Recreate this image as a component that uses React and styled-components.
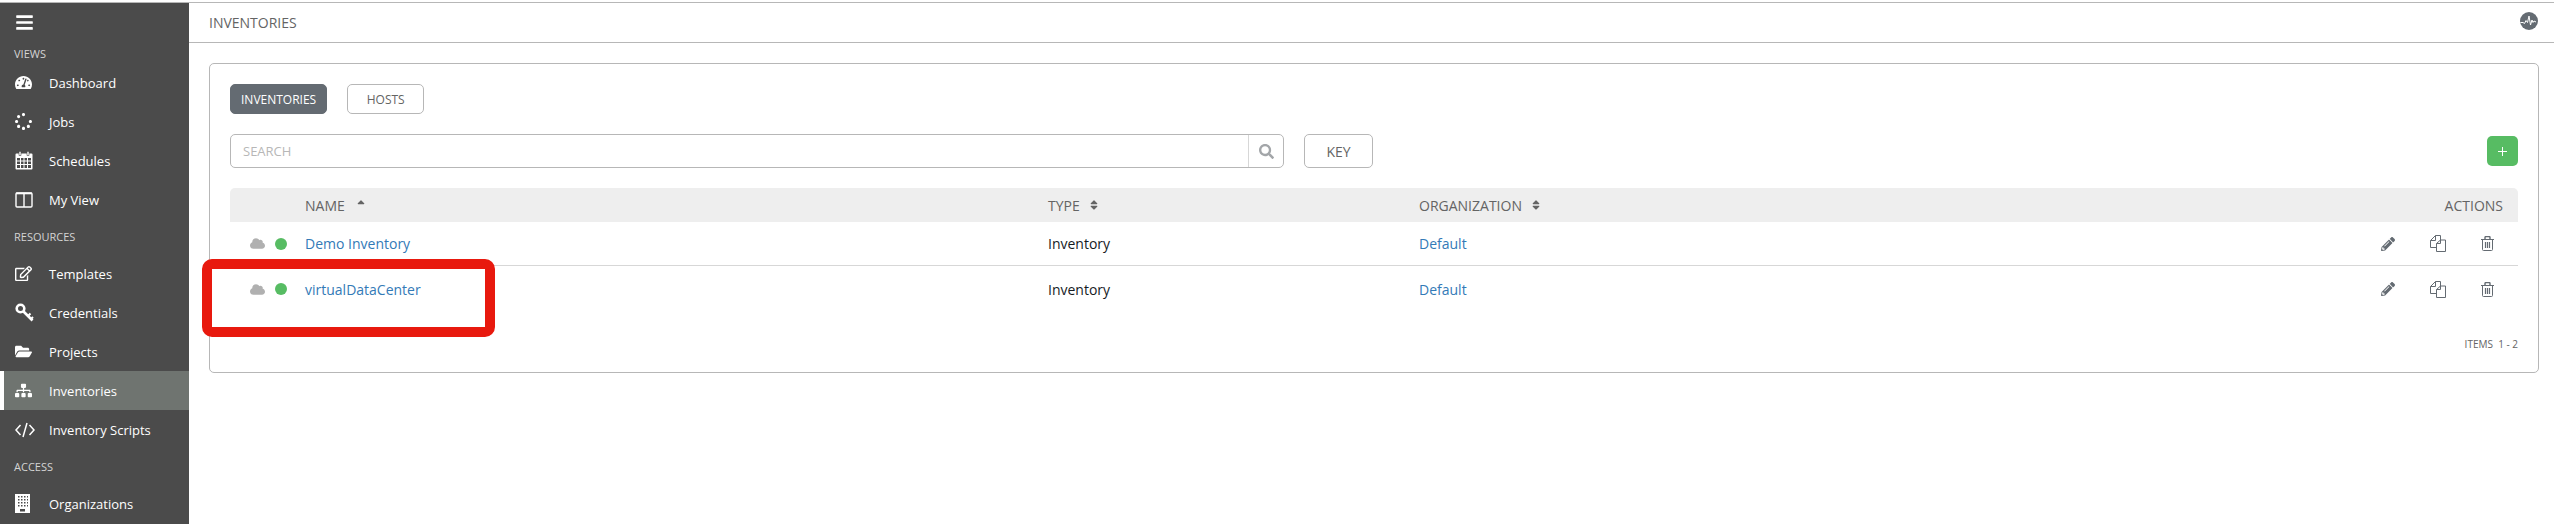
import React from "react";
import styled, { createGlobalStyle } from "styled-components";
import {
  FaBars,
  FaTachometerAlt,
  FaSpinner,
  FaRegEdit,
  FaFolderOpen,
  FaSitemap,
  FaCloud,
  FaSearch,
  FaPencilAlt,
  FaSort,
  FaSortUp,
} from "react-icons/fa";

const GlobalStyle = createGlobalStyle`
  html, body {
    margin: 0;
    background: #fff;
    overflow: hidden;
  }
  * {
    box-sizing: border-box;
  }
  body {
    font-family: "Open Sans", "Liberation Sans", sans-serif;
  }
`;

const CalendarIcon = () => (
  <svg width="18" height="19" viewBox="0 0 18 19">
    <path d="M1.5 2.5h15a1 1 0 0 1 1 1v14a1 1 0 0 1-1 1h-15a1 1 0 0 1-1-1v-14a1 1 0 0 1 1-1z" fill="#fff" />
    <path
      d="M2 7h3v2.500H2zM6 7h2.500v2.500H6zM9.500 7H12v2.500H9.500zM13 7h3v2.500h-3zM2 10.500h3V13H2zM6 10.500h2.500V13H6zM9.500 10.500H12V13H9.500zM13 10.500h3V13h-3zM2 14h3v3H2zM6 14h2.500v3H6zM9.500 14H12v3H9.500zM13 14h3v3h-3z"
      fill="#4b4b4b"
    />
    <path d="M4 0.500h2v4H4zM12 0.500h2v4h-2z" fill="#fff" stroke="#4b4b4b" strokeWidth="0.6" />
  </svg>
);

const ColumnsIcon = () => (
  <svg width="18" height="16" viewBox="0 0 18 16" fill="none">
    <rect x="1" y="1" width="16" height="14" rx="1" stroke="#fff" strokeWidth="1.4" />
    <rect x="1" y="0.5" width="16" height="1.800" fill="#fff" />
    <path d="M9 1v14" stroke="#fff" strokeWidth="1.400" />
  </svg>
);

const KeyIcon = () => (
  <svg width="19" height="19" viewBox="0 0 19 19" fill="none" stroke="#fff">
    <circle cx="5.500" cy="5.500" r="3.800" strokeWidth="2.600" />
    <path d="M8.500 8.500l9 9" strokeWidth="2.600" />
    <path d="M13 13l2.500-2.500M16 16l2-2" strokeWidth="2" />
  </svg>
);

const CodeIcon = () => (
  <svg width="20" height="16" viewBox="0 0 20 16" fill="none" stroke="#fff" strokeWidth="1.500">
    <path d="M5.500 3L1 8l4.500 5M14.500 3L19 8l-4.500 5M12 1L8 15" />
  </svg>
);

const BuildingIcon = () => (
  <svg width="15" height="19" viewBox="0 0 15 19">
    <rect width="15" height="19" fill="#fff" />
    <path
      d="M3 2h1.500v1.500H3zM6 2h1.500v1.500H6zM9 2h1.500v1.500H9zM12 2h1v1.500h-1zM3 5h1.500v1.500H3zM6 5h1.500v1.500H6zM9 5h1.500v1.500H9zM12 5h1v1.500h-1zM3 8h1.500v1.500H3zM6 8h1.500v1.500H6zM9 8h1.500v1.500H9zM12 8h1v1.500h-1zM3 11h1.500v1.500H3zM6 11h1.500v1.500H6zM9 11h1.500v1.500H9zM12 11h1v1.500h-1zM5 15h5v2.500H5z"
      fill="#4b4b4b"
    />
  </svg>
);

const FilesIcon = () => (
  <svg width="16" height="17" viewBox="0 0 16 17" fill="none" stroke="#646b72">
    <path d="M6.500 12.500h-6V5.500l5-5h5v5" />
    <path d="M5.500 0.500v5h-5" />
    <path d="M6.500 16.500v-8l4-3.500h5v11.500z" />
    <path d="M10.500 5v3.500h-4" />
  </svg>
);

const TrashIcon = () => (
  <svg width="13" height="15" viewBox="0 0 13 15" fill="none" stroke="#646b72">
    <path d="M0 3.500h13" />
    <path d="M4 3V1.500a1 1 0 0 1 1-1h3a1 1 0 0 1 1 1V3" strokeWidth="1.400" />
    <path d="M1.500 3.500v10a1 1 0 0 0 1 1h8a1 1 0 0 0 1-1v-10" />
    <path d="M4.500 6v6M6.500 6v6M8.500 6v6" strokeWidth="1.200" />
  </svg>
);

const PlusIcon = () => (
  <svg width="11" height="11" viewBox="0 0 11 11" stroke="#fff">
    <path d="M5.500 1v9M1 5.500h9" />
  </svg>
);

const ActivityIcon = () => (
  <svg width="18" height="18" viewBox="0 0 18 18">
    <circle cx="9" cy="9" r="9" fill="#646b72" />
    <path
      d="M0.500 10.500h2.500l1.500 1 1.500-3 1.500 2 1.500-6.500 1.500 9 1.500-5 1 2.500 1-1.500 2 1"
      fill="none"
      stroke="#fff"
      strokeWidth="1"
    />
  </svg>
);

const views = [
  { label: "Dashboard", icon: <FaTachometerAlt /> },
  { label: "Jobs", icon: <FaSpinner /> },
  { label: "Schedules", icon: <CalendarIcon /> },
  { label: "My View", icon: <ColumnsIcon /> },
];

const resources = [
  { label: "Templates", icon: <FaRegEdit /> },
  { label: "Credentials", icon: <KeyIcon /> },
  { label: "Projects", icon: <FaFolderOpen /> },
  { label: "Inventories", icon: <FaSitemap />, active: true },
  { label: "Inventory Scripts", icon: <CodeIcon /> },
];

const inventories = [{ name: "Demo Inventory" }, { name: "virtualDataCenter" }];

const App = () => {
  return (
    <Page>
      <GlobalStyle />
      <TopLine />
      <Layout>
        <Sidebar>
          <Burger>
            <FaBars />
          </Burger>
          <SectionLabel $first>VIEWS</SectionLabel>
          {views.map((item) => (
            <NavItem key={item.label}>
              <NavIcon>{item.icon}</NavIcon>
              {item.label}
            </NavItem>
          ))}
          <SectionLabel>RESOURCES</SectionLabel>
          {resources.map((item) => (
            <NavItem key={item.label} $active={item.active}>
              <NavIcon>{item.icon}</NavIcon>
              {item.label}
            </NavItem>
          ))}
          <SectionLabel>ACCESS</SectionLabel>
          <NavItem>
            <NavIcon>
              <BuildingIcon />
            </NavIcon>
            Organizations
          </NavItem>
        </Sidebar>

        <Main>
          <TopBar>
            <PageTitle>INVENTORIES</PageTitle>
            <ActivityIcon />
          </TopBar>

          <Card>
            <Tabs>
              <Tab $selected>INVENTORIES</Tab>
              <Tab>HOSTS</Tab>
            </Tabs>

            <Toolbar>
              <SearchBox>
                <SearchInput>SEARCH</SearchInput>
                <SearchButton>
                  <FaSearch />
                </SearchButton>
              </SearchBox>
              <KeyButton>KEY</KeyButton>
              <AddButton>
                <PlusIcon />
              </AddButton>
            </Toolbar>

            <TableHead>
              <span />
              <HeadCell>
                NAME
                <SortMark $active>
                  <FaSortUp />
                </SortMark>
              </HeadCell>
              <HeadCell>
                TYPE
                <SortMark>
                  <FaSort />
                </SortMark>
              </HeadCell>
              <HeadCell>
                ORGANIZATION
                <SortMark>
                  <FaSort />
                </SortMark>
              </HeadCell>
              <ActionsHead>ACTIONS</ActionsHead>
            </TableHead>

            {inventories.map((row, i) => (
              <TableRow key={row.name} $last={i === inventories.length - 1}>
                <StatusCell>
                  <FaCloud />
                  <StatusDot />
                </StatusCell>
                <RowLink>{row.name}</RowLink>
                <span>Inventory</span>
                <RowLink>Default</RowLink>
                <RowActions>
                  <FaPencilAlt />
                  <FilesIcon />
                  <TrashIcon />
                </RowActions>
              </TableRow>
            ))}

            <Pagination>ITEMS&nbsp; 1 - 2</Pagination>
            <Highlight />
          </Card>
        </Main>
      </Layout>
    </Page>
  );
};

const Page = styled.div`
  height: 524px;
  overflow: hidden;
  padding-top: 2px;
`;

const TopLine = styled.div`
  height: 1px;
  background: #b7b7b7;
`;

const Layout = styled.div`
  display: flex;
  height: 521px;
`;

const Sidebar = styled.nav`
  width: 189px;
  flex: none;
  background: #4b4b4b;
  color: #fff;
  overflow: hidden;
`;

const Burger = styled.div`
  height: 38px;
  padding-left: 15px;
  display: flex;
  align-items: center;
  font-size: 19px;
`;

const SectionLabel = styled.div`
  height: ${(p) => (p.$first ? "22px" : "35px")};
  padding: ${(p) => (p.$first ? "3px" : "0")} 0 0 14px;
  display: flex;
  align-items: center;
  font-size: 11px;
  color: #d4d4d4;
`;

const NavItem = styled.div`
  height: 39px;
  display: flex;
  align-items: center;
  font-size: 13px;
  padding-left: ${(p) => (p.$active ? "11px" : "15px")};
  border-left: ${(p) => (p.$active ? "4px solid #fff" : "none")};
  background: ${(p) => (p.$active ? "#6f7470" : "transparent")};
`;

const NavIcon = styled.span`
  width: 34px;
  flex: none;
  display: flex;
  align-items: center;
  font-size: 17px;
`;

const Main = styled.main`
  flex: 1;
  min-width: 0;
`;

const TopBar = styled.header`
  height: 40px;
  border-bottom: 1px solid #b7b7b7;
  padding: 0 16px 0 20px;
  display: flex;
  align-items: center;
  justify-content: space-between;
  svg {
    margin-top: -3px;
  }
`;

const PageTitle = styled.div`
  font-size: 14px;
  color: #646464;
`;

const Card = styled.section`
  position: relative;
  margin: 20px 15px 0 20px;
  height: 310px;
  border: 1px solid #b7b7b7;
  border-radius: 5px;
  padding: 20px 20px 0;
`;

const Tabs = styled.div`
  display: flex;
  gap: 20px;
`;

const Tab = styled.div`
  height: 30px;
  min-width: 77px;
  padding: 0 10px;
  display: flex;
  align-items: center;
  justify-content: center;
  font-size: 12px;
  border-radius: 5px;
  border: 1px solid ${(p) => (p.$selected ? "#646b72" : "#b7b7b7")};
  background: ${(p) => (p.$selected ? "#646b72" : "#fff")};
  color: ${(p) => (p.$selected ? "#fff" : "#646464")};
`;

const Toolbar = styled.div`
  display: flex;
  align-items: center;
  margin-top: 20px;
`;

const SearchBox = styled.div`
  width: 1054px;
  height: 34px;
  border: 1px solid #b7b7b7;
  border-radius: 5px;
  display: flex;
`;

const SearchInput = styled.div`
  flex: 1;
  padding-left: 12px;
  display: flex;
  align-items: center;
  font-size: 13px;
  color: #b7b7b7;
`;

const SearchButton = styled.div`
  width: 35px;
  border-left: 1px solid #d7d7d7;
  display: flex;
  align-items: center;
  justify-content: center;
  font-size: 15px;
  color: #a3a6a9;
`;

const KeyButton = styled.div`
  width: 69px;
  height: 34px;
  margin-left: 20px;
  border: 1px solid #b7b7b7;
  border-radius: 5px;
  display: flex;
  align-items: center;
  justify-content: center;
  font-size: 14px;
  color: #646464;
`;

const AddButton = styled.div`
  width: 31px;
  height: 30px;
  margin-left: auto;
  border-radius: 5px;
  background: #57bc63;
  display: flex;
  align-items: center;
  justify-content: center;
`;

const columns = "75px 743px 371px 1fr 170px";

const TableHead = styled.div`
  display: grid;
  grid-template-columns: ${columns};
  align-items: center;
  height: 34px;
  margin-top: 20px;
  background: #eeeeee;
  border-radius: 5px 5px 0 0;
  font-size: 14px;
  color: #646464;
`;

const HeadCell = styled.div`
  display: flex;
  align-items: center;
`;

const SortMark = styled.span`
  display: flex;
  margin-left: ${(p) => (p.$active ? "10px" : "8px")};
  font-size: 12px;
`;

const ActionsHead = styled.div`
  text-align: right;
  padding-right: 15px;
`;

const TableRow = styled.div`
  display: grid;
  grid-template-columns: ${columns};
  align-items: center;
  height: ${(p) => (p.$last ? "46px" : "44px")};
  font-size: 14px;
  color: #161b1f;
  border-bottom: ${(p) => (p.$last ? "none" : "1px solid #d7d7d7")};
`;

const StatusCell = styled.div`
  display: flex;
  align-items: center;
  gap: 10px;
  padding-left: 20px;
  font-size: 15px;
  color: #b0b0b0;
`;

const StatusDot = styled.span`
  width: 12px;
  height: 12px;
  border-radius: 50%;
  background: #57bc63;
`;

const RowLink = styled.a`
  color: #337ab7;
`;

const RowActions = styled.div`
  display: flex;
  align-items: center;
  justify-content: flex-end;
  gap: 35px;
  padding-right: 24px;
  font-size: 14px;
  color: #646b72;
`;

const Pagination = styled.div`
  margin-top: 25px;
  text-align: right;
  font-size: 10px;
  color: #646464;
`;

const Highlight = styled.div`
  position: absolute;
  left: -8px;
  top: 195px;
  width: 293px;
  height: 78px;
  border: 10px solid #e8190e;
  border-radius: 10px;
`;

export default App;
